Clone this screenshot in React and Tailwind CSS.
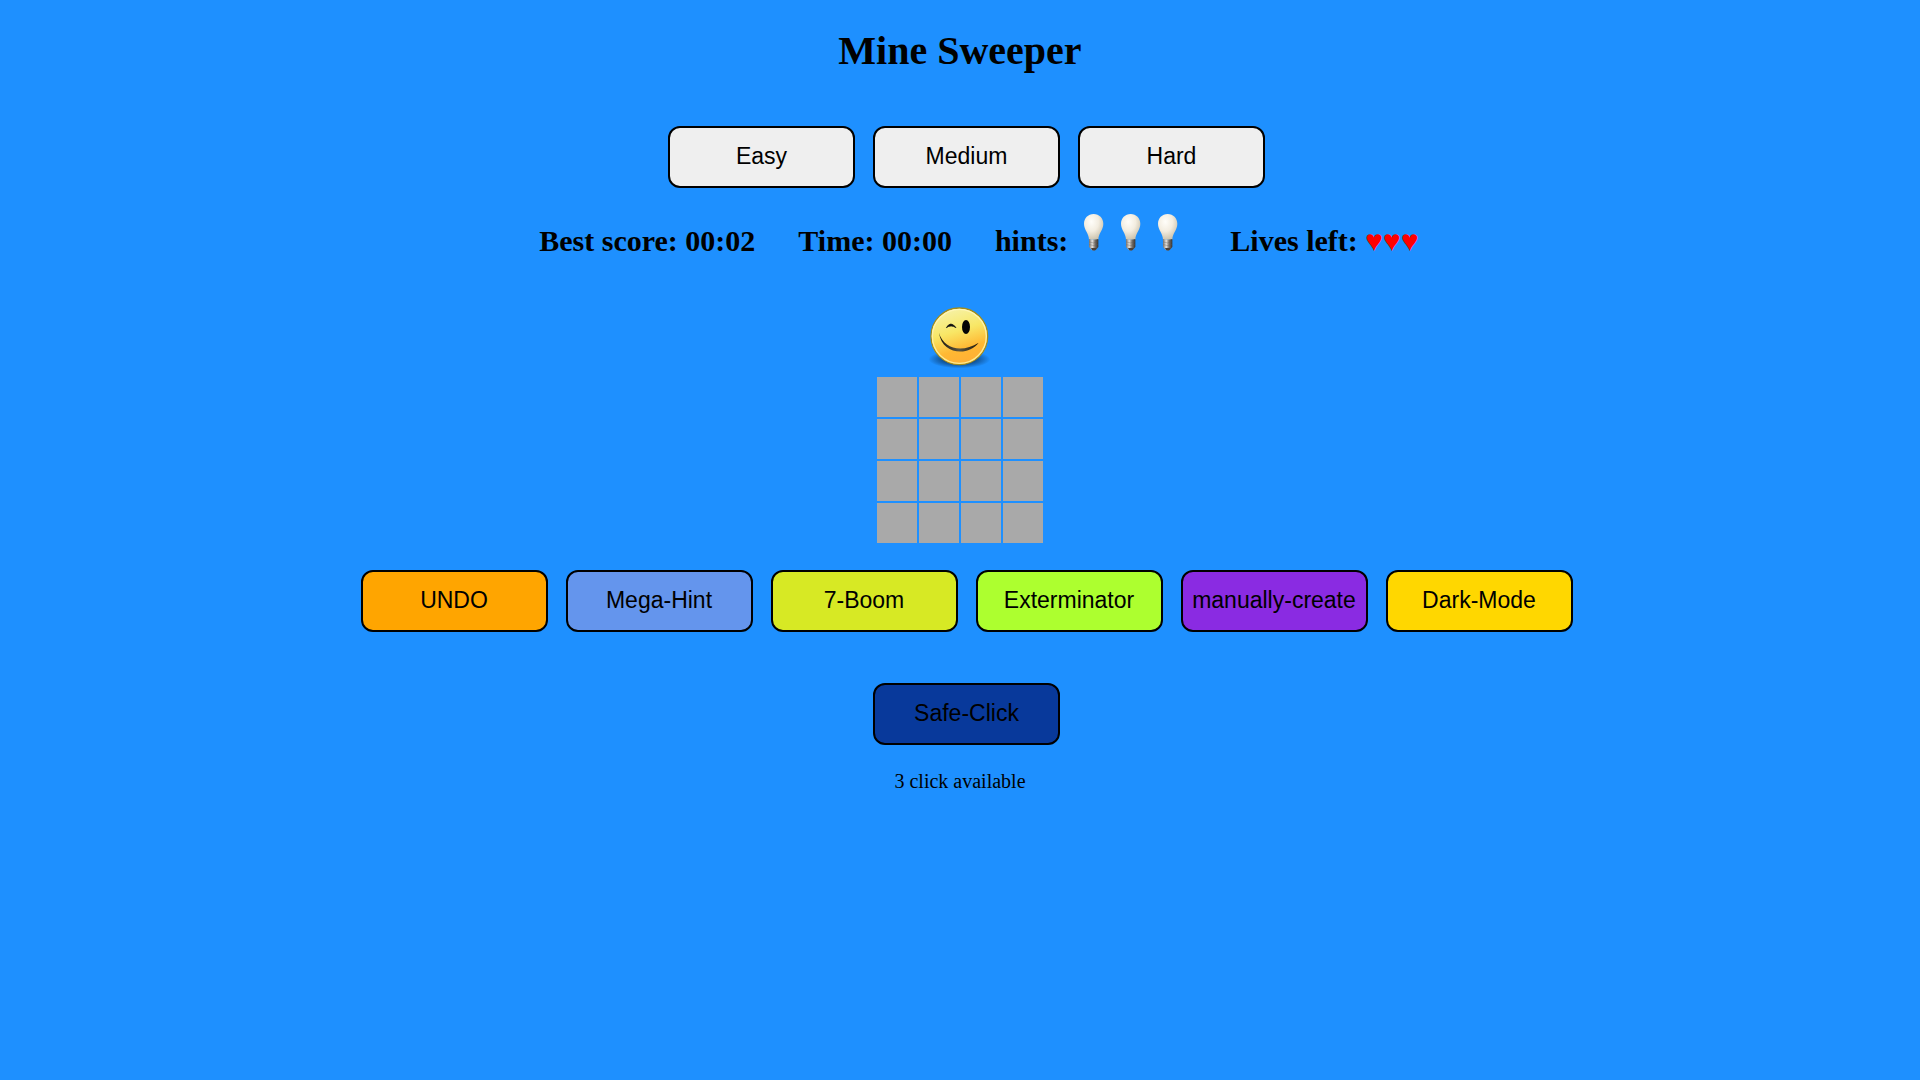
import React from "react";

const levels = ["Easy", "Medium", "Hard"];

const tools = [
  { name: "UNDO", color: "bg-[#ffa500]" },
  { name: "Mega-Hint", color: "bg-[#6495ed]" },
  { name: "7-Boom", color: "bg-[#d7e924]" },
  { name: "Exterminator", color: "bg-[#adff2f]" },
  { name: "manually-create", color: "bg-[#8a2be2]" },
  { name: "Dark-Mode", color: "bg-[#ffd700]" },
];

function GameButton({ children, color }) {
  return (
    <button
      type="button"
      className={`h-[62px] w-[187px] cursor-pointer rounded-xl border-2 border-black pb-0.5 font-['Liberation_Sans',sans-serif] text-[23px] leading-7 whitespace-nowrap text-black ${color}`}
    >
      {children}
    </button>
  );
}

function Bulb() {
  return (
    <svg viewBox="24 9 66 120" className="h-10 w-[22px]" aria-hidden="true">
      <defs>
        <radialGradient id="glass" cx="0.38" cy="0.3" r="0.75">
          <stop offset="0" stopColor="#fffefa" />
          <stop offset="0.5" stopColor="#f3ede0" />
          <stop offset="1" stopColor="#c9bfa8" />
        </radialGradient>
        <linearGradient id="metal" x1="0" x2="1">
          <stop offset="0" stopColor="#77726d" />
          <stop offset="0.35" stopColor="#e6e2dd" />
          <stop offset="0.65" stopColor="#77716b" />
          <stop offset="1" stopColor="#35312e" />
        </linearGradient>
      </defs>
      <path
        d="M56 18C39 18 27 31 27 47C27 66 42 76 42 95H70C70 76 85 66 85 47C85 31 73 18 56 18Z"
        fill="url(#glass)"
      />
      <path d="M42 93Q56 97 70 93V117L63 125Q56 129 50 125L42 117Z" fill="url(#metal)" />
      <path d="M43 102Q56 108 69 101M43 110Q56 116 69 109" fill="none" stroke="#5e5853" strokeWidth="1" />
      <path d="M48 120H65L62 126Q56 129 51 126Z" fill="#4a4039" />
    </svg>
  );
}

function Smiley() {
  return (
    <svg viewBox="48 30 204 192" className="h-16 w-[68px]" aria-hidden="true">
      <defs>
        <linearGradient id="face" x1="0.35" y1="0" x2="0.65" y2="1">
          <stop offset="0" stopColor="#f6f2a8" />
          <stop offset="0.4" stopColor="#f8e766" />
          <stop offset="0.72" stopColor="#ffb833" />
          <stop offset="1" stopColor="#ffae35" />
        </linearGradient>
        <linearGradient id="rim" x1="0" y1="0" x2="0" y2="1">
          <stop offset="0" stopColor="#fff6b8" />
          <stop offset="1" stopColor="#ffe98c" />
        </linearGradient>
        <linearGradient id="mouth" x1="0" x2="1">
          <stop offset="0" stopColor="#17140c" />
          <stop offset="0.5" stopColor="#5a5542" />
          <stop offset="1" stopColor="#221a08" />
        </linearGradient>
        <radialGradient id="shadow">
          <stop offset="0.5" stopColor="#0b3766" stopOpacity="0.75" />
          <stop offset="1" stopColor="#0b3766" stopOpacity="0" />
        </radialGradient>
      </defs>
      <ellipse cx="148" cy="193" rx="93" ry="27" fill="url(#shadow)" />
      <circle cx="148" cy="124" r="85" fill="url(#face)" stroke="#a18c1c" strokeWidth="4" />
      <circle cx="148" cy="124" r="81" fill="none" stroke="url(#rim)" strokeWidth="4" />
      <path d="M109 98Q122 76 138 98Q123 88 109 98Z" fill="#111" stroke="#111" strokeWidth="2" />
      <ellipse cx="168" cy="96" rx="12" ry="21" fill="#050505" />
      <path d="M87 113C101 163 157 174 206 143C176 184 96 180 87 113Z" fill="url(#mouth)" />
    </svg>
  );
}

export default function App() {
  return (
    <main className="flex min-h-screen flex-col items-center bg-[#1e90ff] font-['Liberation_Serif',serif] text-black">
      <h1 className="mt-7 text-[40px] leading-[46px] font-bold">Mine Sweeper</h1>

      <div className="mt-13 flex justify-center gap-[18px] pl-[13px]">
        {levels.map((level) => (
          <GameButton key={level} color="bg-[#efefef]">
            {level}
          </GameButton>
        ))}
      </div>

      <div className="mt-[23px] flex items-baseline justify-center gap-[43px] pl-[38px] text-[30px] leading-10 font-bold">
        <span>Best score: 00:02</span>
        <span>Time: 00:00</span>
        <span className="flex items-baseline gap-[15px]">
          hints:
          <span className="flex gap-[15px] pr-2">
            <Bulb />
            <Bulb />
            <Bulb />
          </span>
        </span>
        <span>
          Lives left: <span className="text-[#ff0000]">♥♥♥</span>
        </span>
      </div>

      <button type="button" aria-label="Restart game" className="mt-11 cursor-pointer">
        <Smiley />
      </button>

      <table className="mt-1.5 border-separate border-spacing-0.5">
        <tbody>
          {[0, 1, 2, 3].map((row) => (
            <tr key={row}>
              {[0, 1, 2, 3].map((col) => (
                <td key={col} className="size-10 bg-[#a9a9a9] p-0" />
              ))}
            </tr>
          ))}
        </tbody>
      </table>

      <div className="mt-[25px] flex flex-wrap justify-center gap-[18px] pl-[13px]">
        {tools.map((tool) => (
          <GameButton key={tool.name} color={tool.color}>
            {tool.name}
          </GameButton>
        ))}
      </div>

      <div className="mt-[51px] flex justify-center pl-[13px]">
        <GameButton color="bg-[#08399b]">Safe-Click</GameButton>
      </div>
      <p className="mt-6 text-xl leading-6">3 click available</p>
    </main>
  );
}
